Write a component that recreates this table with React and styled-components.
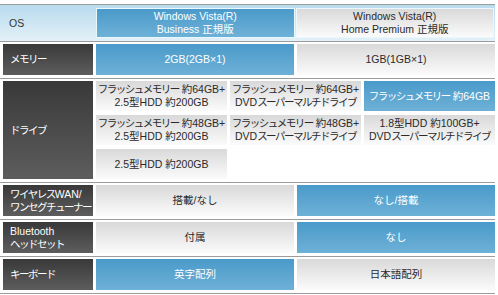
import React from "react";
import styled, { createGlobalStyle, css } from "styled-components";

const GlobalStyle = createGlobalStyle`
  html, body {
    margin: 0;
    padding: 0;
    background: #fff;
  }
  body {
    font-family: "Liberation Sans", "Noto Sans CJK JP", sans-serif;
    font-size: 10.5px;
    line-height: 13px;
  }
`;

const SpecTable = styled.div`
  width: 495px;
  margin-top: 4px;
  border-bottom: 1px solid #9c9c9c;
`;

const Row = styled.div`
  display: grid;
  grid-template-columns: 90px 1fr;
  column-gap: 3px;
  padding: 2px 0 3px 3px;
  border-top: 1px solid #9c9c9c;
`;

const HeadRow = styled.div`
  display: grid;
  grid-template-columns: 95px 1fr 1fr;
  column-gap: 1px;
  height: 30px;
  padding: 3px 1px 3px 0;
  border-top: 1px solid #9c9c9c;
  background: linear-gradient(#b8dbee, #e3f1f8);
`;

const HeadLabel = styled.div`
  display: flex;
  align-items: center;
  padding-left: 9px;
  color: #333;
`;

const Label = styled.div`
  display: flex;
  align-items: center;
  padding-left: 7px;
  color: #fff;
  white-space: nowrap;
  background: linear-gradient(#393939, #5d5d5d);
`;

const Options = styled.div`
  display: grid;
  grid-template-columns: repeat(${(p) => p.cols || 2}, 1fr);
  grid-template-rows: repeat(${(p) => p.rows || 1}, 1fr);
  gap: 4px 3px;
  height: ${(p) => (p.rows ? p.rows * 30 + (p.rows - 1) * 4 : 31)}px;
`;

const Cell = styled.div`
  display: flex;
  align-items: center;
  justify-content: center;
  text-align: center;
  white-space: nowrap;
  color: #2a2a2a;
  background: linear-gradient(#d9d9d9, #fbfbfb);
  ${(p) =>
    p.active &&
    css`
      color: #fff;
      background: linear-gradient(#4a9aca, #6eb1d7);
    `}
  ${(p) =>
    p.framed &&
    css`
      border: 1px solid #e8f8fc;
    `}
`;

// katakana in the original bitmap font is set narrow
const Kana = styled.span`
  letter-spacing: -1.5px;
`;

const drives = [
  ["フラッシュメモリー 約64GB+", "2.5型HDD 約200GB"],
  ["フラッシュメモリー 約64GB+", "DVDスーパーマルチドライブ"],
  ["フラッシュメモリー 約64GB"],
  ["フラッシュメモリー 約48GB+", "2.5型HDD 約200GB"],
  ["フラッシュメモリー 約48GB+", "DVDスーパーマルチドライブ"],
  ["1.8型HDD 約100GB+", "DVDスーパーマルチドライブ"],
  ["2.5型HDD 約200GB"],
];

const rows = [
  { label: ["メモリー"], values: ["2GB(2GB×1)", "1GB(1GB×1)"], active: 0 },
  { label: ["ワイヤレスWAN/", "ワンセグチューナー"], values: ["搭載/なし", "なし/搭載"], active: 1 },
  { label: ["Bluetooth", "ヘッドセット"], values: ["付属", "なし"], active: 1 },
  { label: ["キーボード"], values: ["英字配列", "日本語配列"], active: 0 },
];

const Text = ({ children }) =>
  children
    .split(/([\u30a0-\u30ff]+)/)
    .map((part, i) => (/[\u30a0-\u30ff]/.test(part) ? <Kana key={i}>{part}</Kana> : part));

const Lines = ({ lines }) =>
  lines.map((l, i) => (
    <React.Fragment key={i}>
      {i > 0 && <br />}
      <Text>{l}</Text>
    </React.Fragment>
  ));

function SpecRow({ label, values, active }) {
  return (
    <Row>
      <Label>
        <span>
          <Lines lines={label} />
        </span>
      </Label>
      <Options cols={2}>
        {values.map((v, i) => (
          <Cell key={i} active={i === active}>
            <Text>{v}</Text>
          </Cell>
        ))}
      </Options>
    </Row>
  );
}

export default function App() {
  return (
    <>
      <GlobalStyle />
      <SpecTable>
        <HeadRow>
          <HeadLabel>OS</HeadLabel>
          <Cell active framed>
            <span>
              <Lines lines={["Windows Vista(R)", "Business 正規版"]} />
            </span>
          </Cell>
          <Cell framed>
            <span>
              <Lines lines={["Windows Vista(R)", "Home Premium 正規版"]} />
            </span>
          </Cell>
        </HeadRow>
        <SpecRow {...rows[0]} />
        <Row>
          <Label>
            <Text>ドライブ</Text>
          </Label>
          <Options cols={3} rows={3}>
            {drives.map((d, i) => (
              <Cell key={i} active={i === 2}>
                <span>
                  <Lines lines={d} />
                </span>
              </Cell>
            ))}
          </Options>
        </Row>
        {rows.slice(1).map((r, i) => (
          <SpecRow key={i} {...r} />
        ))}
      </SpecTable>
    </>
  );
}
